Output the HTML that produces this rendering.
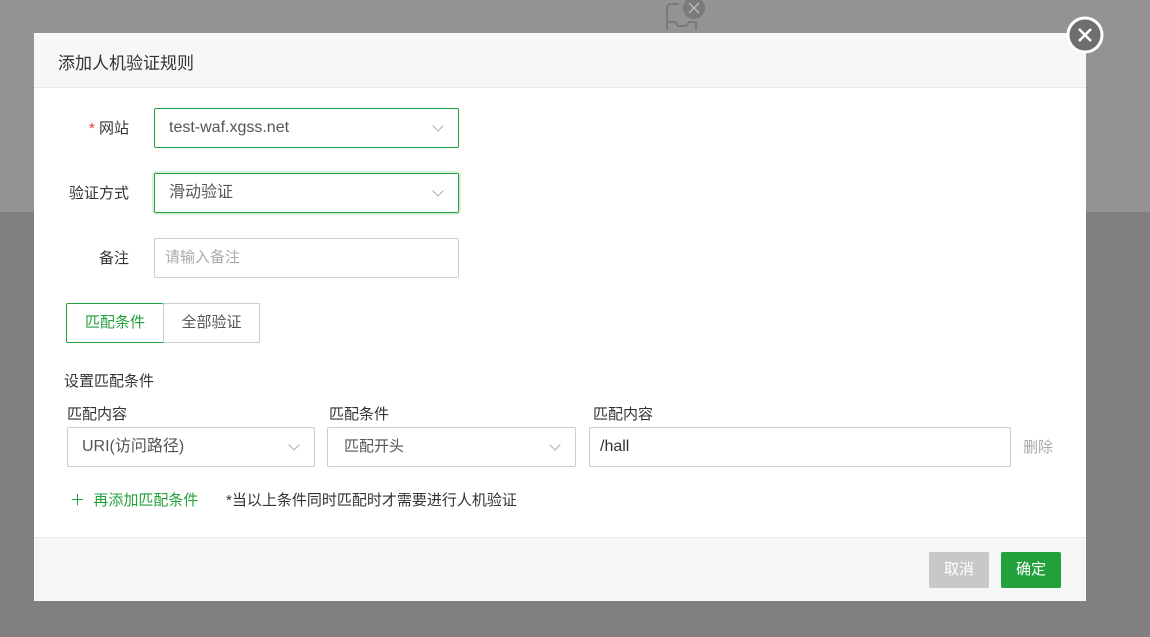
<!DOCTYPE html>
<html><head><meta charset="utf-8"><style>
*{box-sizing:border-box;margin:0;padding:0}
body{width:1150px;height:637px;overflow:hidden;position:relative;background:#808080;font-family:"Liberation Sans","Noto Sans CJK SC",sans-serif;font-size:15px;color:#333}
.top{position:absolute;left:0;top:0;width:1150px;height:212px;background:#939393}
.modal{position:absolute;left:34px;top:33px;width:1052px;height:568px;background:#fff}
.hd{height:55px;background:#f7f7f7;border-bottom:1px solid #e8e8e8;padding:16px 24px;font-size:17px;color:#333}
.ft{position:absolute;left:0;right:0;bottom:0;height:64px;background:#f5f6f6;border-top:1px solid #ececec}
.abs{position:absolute}
.lbl{position:absolute;width:95px;text-align:right;font-size:15px;color:#333}
.box{position:absolute;border:1px solid #ccc;border-radius:2px;height:40px;line-height:38px;padding-left:14px;font-size:16px;color:#555}
.g{border-color:#22a03c}
.arr{position:absolute;right:16px;top:13px;width:8px;height:8px;border-right:1px solid #aaa;border-bottom:1px solid #aaa;transform:rotate(45deg)}
.btn{position:absolute;height:36px;line-height:36px;text-align:center;color:#fff;font-size:15px;border-radius:2px}
</style></head><body>
<div class="top"></div>
<svg class="abs" style="left:664px;top:0" width="44" height="34"><path d="M3 30 V8 a4 4 0 0 1 4-4 h8 M3 22 h8 l3 4 h8 l3-4 h7 V30" fill="none" stroke="#7a7a7a" stroke-width="2"/><circle cx="30" cy="8" r="11" fill="#7a7a7a"/><path d="M25 3l10 10M35 3L25 13" stroke="#bbb" stroke-width="1.5"/></svg>
<div class="modal">
<div class="hd">添加人机验证规则</div>
<div class="lbl" style="left:0;top:84px"><span style="color:#e33">*</span> 网站</div>
<div class="box g" style="left:120px;top:75px;width:305px">test-waf.xgss.net<span class="arr"></span></div>
<div class="lbl" style="left:0;top:149px">验证方式</div>
<div class="box g" style="left:120px;top:140px;width:305px;box-shadow:0 0 0 2px #dcefdf">滑动验证<span class="arr"></span></div>
<div class="lbl" style="left:0;top:214px">备注</div>
<div class="box" style="left:120px;top:205px;width:305px;font-size:15px;color:#aaa;padding-left:10px">请输入备注</div>
<div class="box g" style="left:32px;top:270px;width:98px;text-align:center;padding:0;color:#22a03c;font-size:15px">匹配条件</div>
<div class="box" style="left:129px;top:270px;width:97px;text-align:center;padding:0;color:#555;font-size:15px">全部验证</div>
<div class="abs" style="left:30px;top:337px">设置匹配条件</div>
<div class="abs" style="left:33px;top:370px">匹配内容</div>
<div class="abs" style="left:295px;top:370px">匹配条件</div>
<div class="abs" style="left:559px;top:370px">匹配内容</div>
<div class="box" style="left:33px;top:394px;width:248px">URI(访问路径)<span class="arr"></span></div>
<div class="box" style="left:293px;top:394px;width:249px;padding-left:16px;font-size:15px">匹配开头<span class="arr"></span></div>
<div class="box" style="left:555px;top:394px;width:422px;padding-left:10px;color:#333">/hall</div>
<div class="abs" style="left:989px;top:403px;color:#aaa">删除</div>
<div class="abs" style="left:36px;top:456px;color:#22a03c">＋&nbsp;&nbsp;再添加匹配条件</div>
<div class="abs" style="left:192px;top:456px">*当以上条件同时匹配时才需要进行人机验证</div>
<div class="ft">
<div class="btn" style="left:895px;top:14px;width:60px;background:#c8c8c8">取消</div>
<div class="btn" style="left:967px;top:14px;width:60px;background:#22a03c">确定</div>
</div>
</div>
<svg class="abs" style="left:1066px;top:16px" width="38" height="38"><circle cx="19" cy="19" r="17" fill="#6e6e6e" stroke="#fff" stroke-width="3"/><path d="M13 13l12 12M25 13L13 25" stroke="#fff" stroke-width="2.5"/></svg>
</body></html>
